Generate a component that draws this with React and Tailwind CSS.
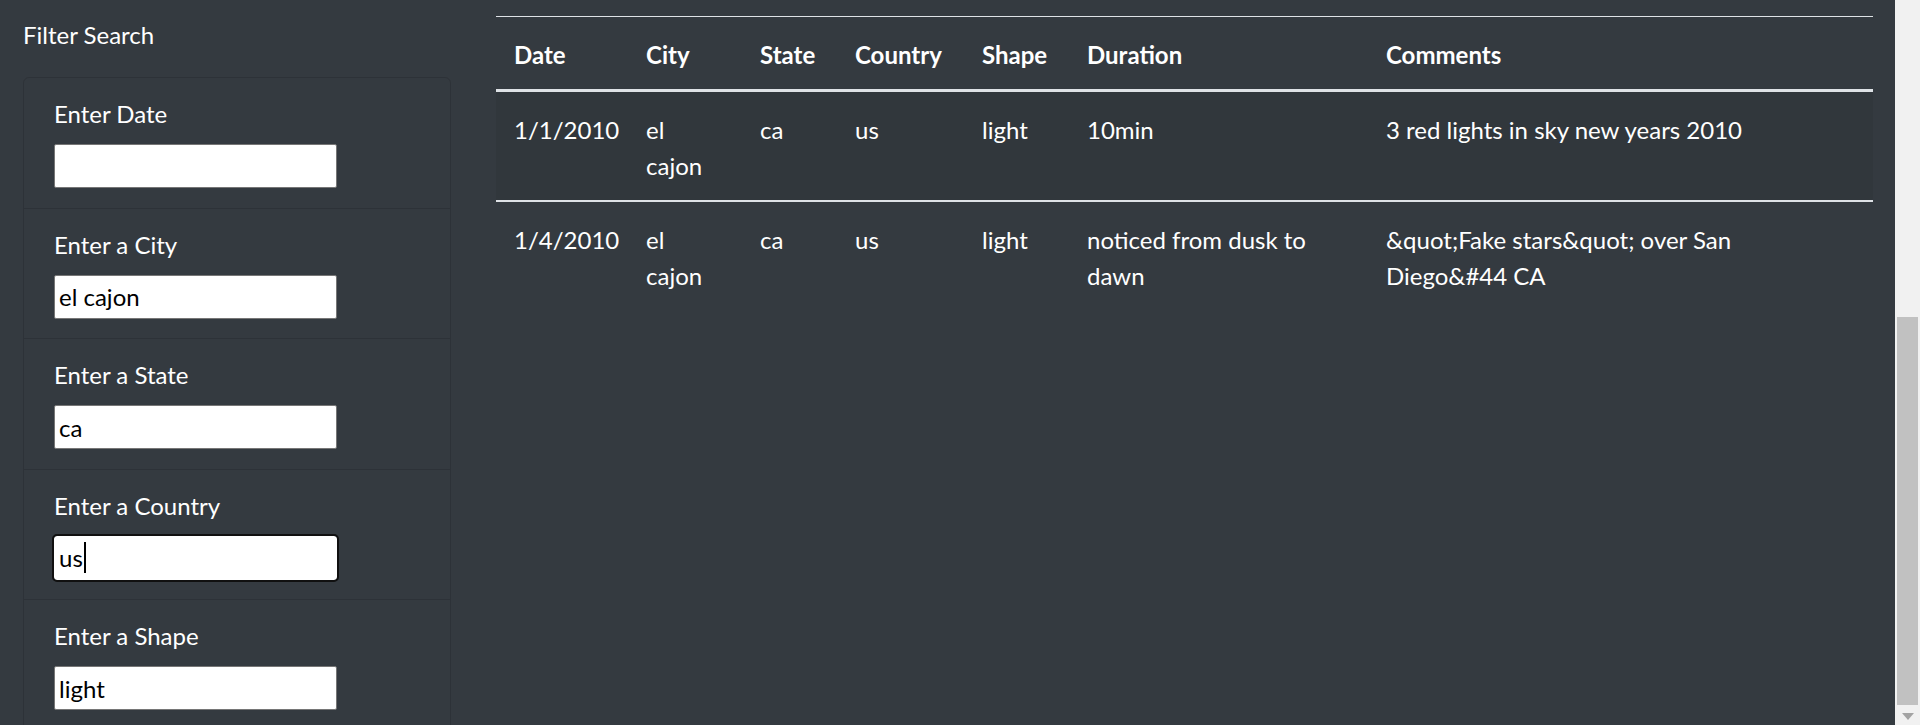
import React from 'react';

const sightings = [
  {
    date: '1/1/2010',
    city: 'el cajon',
    state: 'ca',
    country: 'us',
    shape: 'light',
    duration: '10min',
    comments: '3 red lights in sky new years 2010',
  },
  {
    date: '1/4/2010',
    city: 'el cajon',
    state: 'ca',
    country: 'us',
    shape: 'light',
    duration: 'noticed from dusk to dawn',
    comments: '&quot;Fake stars&quot; over San Diego&#44 CA',
  },
];

const filters = [
  { label: 'Enter Date', value: '' },
  { label: 'Enter a City', value: 'el cajon' },
  { label: 'Enter a State', value: 'ca' },
  { label: 'Enter a Country', value: 'us', focused: true },
  { label: 'Enter a Shape', value: 'light' },
];

const FilterItem = ({ label, value, focused, first }) => (
  <li className={`px-[30px] pt-[18px] pb-[19.5px] ${first ? '' : 'border-t border-black/[0.125]'}`}>
    <label className="block">{label}</label>
    {focused ? (
      // country field is the one with focus in the screenshot
      <div className="mt-[12px] flex h-[44px] w-[283px] items-center rounded-[3px] bg-white px-[5px] text-black outline-2 outline-[#101010]">
        <span>{value}</span>
        <span className="ml-px inline-block h-[31px] w-[2px] bg-black" />
      </div>
    ) : (
      <input
        type="text"
        defaultValue={value}
        className="mt-[12px] block h-[44px] w-[283px] rounded-[2px] border border-[#767676] bg-white px-[4px] text-black outline-none"
      />
    )}
  </li>
);

const App = () => {
  return (
    <div className="flex h-[725px] w-full overflow-hidden bg-[#343a40] font-['Lato',sans-serif] text-[24px] leading-[36px] text-white">
      <div className="flex min-w-0 flex-1 pl-[23px] pr-[22px]">
        {/* ============ Sidebar filters ============ */}
        <aside className="w-[428px] shrink-0 pt-[17px]">
          <div>Filter Search</div>
          <ul className="mt-[24px] rounded-[6px] border border-black/[0.125]">
            {filters.map((f, i) => (
              <FilterItem key={f.label} {...f} first={i === 0} />
            ))}
          </ul>
        </aside>

        {/* ============ Results table ============ */}
        <main className="ml-[45px] min-w-0 flex-1 pt-[16px]">
          <table className="w-full table-fixed border-collapse text-left">
            <thead>
              <tr className="border-t border-b-[3px] border-[#dee2e6]">
                <th className="w-[132px] px-[18px] pt-[20px] pb-[16px] font-bold">Date</th>
                <th className="w-[114px] px-[18px] pt-[20px] pb-[16px] font-bold">City</th>
                <th className="w-[95px] px-[18px] pt-[20px] pb-[16px] font-bold">State</th>
                <th className="w-[127px] px-[18px] pt-[20px] pb-[16px] font-bold">Country</th>
                <th className="w-[105px] px-[18px] pt-[20px] pb-[16px] font-bold">Shape</th>
                <th className="w-[299px] px-[18px] pt-[20px] pb-[16px] font-bold">Duration</th>
                <th className="px-[18px] pt-[20px] pb-[16px] font-bold">Comments</th>
              </tr>
            </thead>
            <tbody>
              {sightings.map((s, i) => (
                <tr key={i} className={i % 2 === 0 ? 'bg-black/5' : 'border-t-2 border-[#dee2e6]'}>
                  <td className="px-[18px] pt-[20px] pb-[16px] align-top">{s.date}</td>
                  <td className="px-[18px] pt-[20px] pb-[16px] align-top">{s.city}</td>
                  <td className="px-[18px] pt-[20px] pb-[16px] align-top">{s.state}</td>
                  <td className="px-[18px] pt-[20px] pb-[16px] align-top">{s.country}</td>
                  <td className="px-[18px] pt-[20px] pb-[16px] align-top">{s.shape}</td>
                  <td className="px-[18px] pt-[20px] pb-[16px] align-top">{s.duration}</td>
                  <td className="px-[18px] pt-[20px] pb-[16px] align-top">{s.comments}</td>
                </tr>
              ))}
            </tbody>
          </table>
        </main>
      </div>

      {/* ============ Scrollbar ============ */}
      <div className="flex w-[25px] shrink-0 flex-col items-center bg-[#f1f1f1] pt-[317px]">
        <div className="h-[388px] w-[21px] bg-[#c1c1c1]" />
        <svg className="mt-[8px]" width="12" height="7" viewBox="0 0 12 7">
          <path d="M0 0H12L6 7Z" fill="#a3a3a3" />
        </svg>
      </div>
    </div>
  );
};

export default App;
